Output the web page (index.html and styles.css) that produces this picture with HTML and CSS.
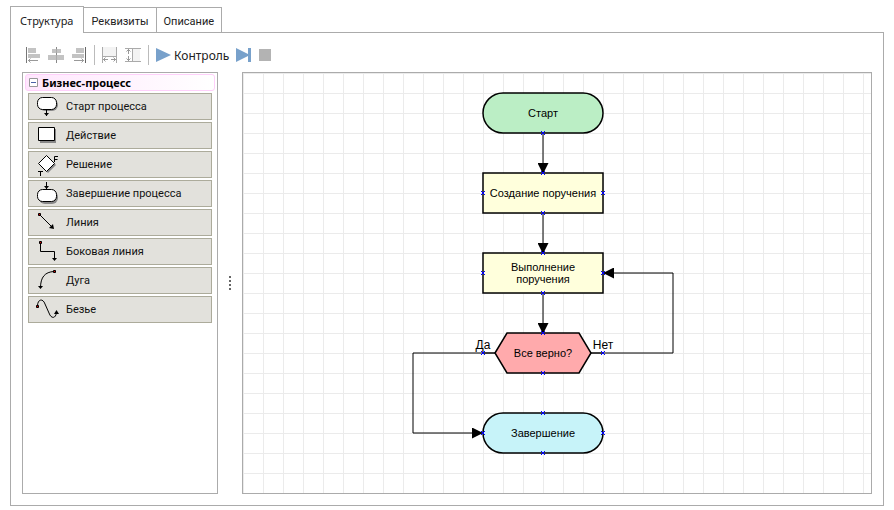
FILE: index.html
```html
<!DOCTYPE html>
<html lang="ru">
<head>
    <meta charset="UTF-8">
    <title>Бизнес-процесс</title>
    <link rel="stylesheet" href="styles.css">
</head>
<body>
    <div class="tabs" role="tablist">
        <button class="tab active" type="button" role="tab" aria-selected="true">Структура</button>
        <button class="tab" type="button" role="tab" aria-selected="false">Реквизиты</button>
        <button class="tab" type="button" role="tab" aria-selected="false">Описание</button>
    </div>
    <main class="panel">
        <div class="toolbar" role="toolbar">
            <button class="tool" type="button" aria-label="По левому краю">
                <svg width="16" height="18" viewBox="0 0 16 18">
                    <path d="M1.500 1v16" stroke="#777" fill="none"/>
                    <path d="M3 2h8v5H3zM3 8h12v4H3z" fill="#c3c3c3"/>
                    <path d="M3 14.500h10M5.500 12.500l-2 2 2 2" stroke="#999" fill="none"/>
                </svg>
            </button>
            <button class="tool" type="button" aria-label="По центру">
                <svg width="16" height="18" viewBox="0 0 16 18">
                    <path d="M8.500 1v16" stroke="#888" fill="none"/>
                    <path d="M4 3h9v4H4zM0 9h16v5H0z" fill="#c3c3c3"/>
                    <path d="M8.500 3v4M8.500 9v5" stroke="#aaa"/>
                </svg>
            </button>
            <button class="tool" type="button" aria-label="По правому краю">
                <svg width="16" height="18" viewBox="0 0 16 18">
                    <path d="M14.500 1v16" stroke="#666" fill="none"/>
                    <path d="M5 2h8v5H5zM1 8h12v4H1z" fill="#c3c3c3"/>
                    <path d="M3 14.500h10M10.500 12.500l2 2-2 2" stroke="#999" fill="none"/>
                </svg>
            </button>
            <span class="separator"></span>
            <button class="tool" type="button" aria-label="Одинаковая ширина">
                <svg width="16" height="18" viewBox="0 0 16 18">
                    <path d="M1 1h13v9H1z" fill="#f3f3f3"/>
                    <path d="M.5 1v16M14.500 1v16M1 10.500h14" stroke="#aaa" fill="none"/>
                    <path d="M1 13.500h5M9 13.500h5M3.500 11.500l-2 2 2 2M11.500 11.500l2 2-2 2" stroke="#999" fill="none"/>
                </svg>
            </button>
            <button class="tool" type="button" aria-label="Одинаковая высота">
                <svg width="16" height="18" viewBox="0 0 16 18">
                    <path d="M7 3h8v12H7z" fill="#f3f3f3"/>
                    <path d="M0 2.500h16M0 15.500h16M7.500 2v14" stroke="#aaa" fill="none"/>
                    <path d="M3.500 3v5M3.500 10v5M1.500 5.500l2-2 2 2M1.500 12.500l2 2 2-2" stroke="#999" fill="none"/>
                </svg>
            </button>
            <span class="separator"></span>
            <button class="tool check" type="button">
                <svg width="16" height="16" viewBox="0 0 16 16"><path d="M0 1l15 7-15 7z" fill="#78a1cb"/></svg>
                Контроль
            </button>
            <button class="tool" type="button" aria-label="Шаг">
                <svg width="16" height="16" viewBox="0 0 16 16"><path d="M0 1l12 6V1h3v14h-3V9L0 15z" fill="#78a1cb"/></svg>
            </button>
            <button class="tool" type="button" aria-label="Стоп">
                <svg width="12" height="12" viewBox="0 0 12 12"><path d="M0 0h12v12H0z" fill="#b3b3b3"/></svg>
            </button>
        </div>
        <div class="workspace">
            <aside class="palette">
                <button class="group" type="button" aria-expanded="true">
                    <svg width="9" height="9" viewBox="0 0 9 9">
                        <path d="M.5.5h8v8h-8z" fill="#fff" stroke="#989898"/>
                        <path d="M2 4.500h5" stroke="#4b63a7"/>
                    </svg>
                    Бизнес-процесс
                </button>
                <div class="items">
                    <button class="item" type="button">
                        <svg width="24" height="25" viewBox="0 0 24 25">
                            <rect x="4" y="5" width="19" height="12" rx="6" fill="#888"/>
                            <rect x="2.500" y="3.500" width="19" height="12" rx="5" fill="#fff" stroke="#000"/>
                            <path d="M11.500 16v6" stroke="#000"/>
                            <path d="M9 19h5l-2.500 3z"/>
                        </svg>
                        Старт процесса
                    </button>
                    <button class="item" type="button">
                        <svg width="24" height="25" viewBox="0 0 24 25">
                            <path d="M5 6h16v14H5z" fill="#888"/>
                            <path d="M3.500 4.500h16v13h-16z" fill="#fff" stroke="#000"/>
                        </svg>
                        Действие
                    </button>
                    <button class="item" type="button">
                        <svg width="24" height="25" viewBox="0 0 24 25">
                            <path d="M13 5l8 8-8 8-8-8z" fill="#888"/>
                            <path d="M11.500 3.500l8 8-8 8-8-8z" fill="#fff" stroke="#000"/>
                            <path d="M19.500 10V4.500H23M19.500 7.500h3M3 19.500h5M5.500 19v5" fill="none" stroke="#000"/>
                        </svg>
                        Решение
                    </button>
                    <button class="item" type="button">
                        <svg width="24" height="25" viewBox="0 0 24 25">
                            <rect x="4" y="10" width="19" height="13" rx="6" fill="#888"/>
                            <rect x="2.500" y="8.500" width="19" height="12" rx="5" fill="#fff" stroke="#000"/>
                            <path d="M11.500 1v7" stroke="#000"/>
                            <path d="M9 5h5l-2.500 3z"/>
                        </svg>
                        Завершение процесса
                    </button>
                    <button class="item" type="button">
                        <svg width="24" height="25" viewBox="0 0 24 25">
                            <path d="M5 5l13 13" stroke="#000"/>
                            <path d="M19 19l-5-1 4-4z"/>
                            <path d="M3.500 3.500h2v2h-2z" fill="#d00" stroke="#000"/>
                        </svg>
                        Линия
                    </button>
                    <button class="item" type="button">
                        <svg width="24" height="25" viewBox="0 0 24 25">
                            <path d="M5.500 4v8.500h14V21" fill="none" stroke="#000"/>
                            <path d="M17 19h5l-2.500 3z"/>
                            <path d="M4.500 2.500h2v2h-2z" fill="#d00" stroke="#000"/>
                        </svg>
                        Боковая линия
                    </button>
                    <button class="item" type="button">
                        <svg width="24" height="25" viewBox="0 0 24 25">
                            <path d="M19 3.500C10 4 5.500 9 5.500 20" fill="none" stroke="#000"/>
                            <path d="M3 18h5l-2.500 3z"/>
                            <path d="M18.500 2.500h2v2h-2z" fill="#d00" stroke="#000"/>
                        </svg>
                        Дуга
                    </button>
                    <button class="item" type="button">
                        <svg width="24" height="25" viewBox="0 0 24 25">
                            <path d="M2.500 9C2.500 2 8 1 10 7l4 9c2 6 7 6 7.500-1" fill="none" stroke="#000"/>
                            <path d="M19 17h5l-2.500-4z"/>
                            <path d="M1.500 8.500h2v2h-2z" fill="#d00" stroke="#000"/>
                        </svg>
                        Безье
                    </button>
                </div>
            </aside>
            <div class="splitter">
                <span></span><span></span><span></span><span></span>
            </div>
            <section class="canvas">
                <svg class="diagram" width="480" height="400" viewBox="0 0 480 400">
                    <defs>
                        <marker id="arrow" viewBox="0 0 11 11" refX="11" refY="5.500" markerWidth="11" markerHeight="11" orient="auto">
                            <path d="M0 0l11 5.500L0 11z"/>
                        </marker>
                        <path id="port" d="M-2-2l4 4M-2 2l4-4"/>
                    </defs>

                    <g class="links">
                        <path d="M300 60v41"/>
                        <path d="M300 140v41"/>
                        <path d="M300 220v41"/>
                        <path d="M360 280h70v-80h-70"/>
                        <path d="M240 280h-70v80h70"/>
                    </g>

                    <g class="nodes">
                        <rect class="start" x="240" y="20" width="120" height="40" rx="20"/>
                        <rect class="action" x="240" y="100" width="120" height="40"/>
                        <rect class="action" x="240" y="180" width="120" height="40"/>
                        <path class="decision" d="M252 280l12-20h72l12 20-12 20h-72z"/>
                        <path d="M240 280h12M348 280h12"/>
                        <rect class="finish" x="240" y="340" width="120" height="40" rx="20"/>
                    </g>

                    <g class="captions">
                        <text x="300" y="44">Старт</text>
                        <text x="300" y="124">Создание поручения</text>
                        <text x="300" y="198">Выполнение</text>
                        <text x="300" y="210">поручения</text>
                        <text x="300" y="284">Все верно?</text>
                        <text x="300" y="364">Завершение</text>
                        <text class="branch" x="240" y="276">Да</text>
                        <text class="branch" x="360" y="276">Нет</text>
                    </g>

                    <g class="ports">
                        <use href="#port" x="300" y="60"/>
                        <use href="#port" x="300" y="100"/>
                        <use href="#port" x="240" y="120"/>
                        <use href="#port" x="360" y="120"/>
                        <use href="#port" x="300" y="140"/>
                        <use href="#port" x="300" y="180"/>
                        <use href="#port" x="240" y="200"/>
                        <use href="#port" x="360" y="200"/>
                        <use href="#port" x="300" y="220"/>
                        <use href="#port" x="300" y="260"/>
                        <use href="#port" x="240" y="280"/>
                        <use href="#port" x="360" y="280"/>
                        <use href="#port" x="300" y="300"/>
                        <use href="#port" x="300" y="340"/>
                        <use href="#port" x="240" y="360"/>
                        <use href="#port" x="360" y="360"/>
                        <use href="#port" x="300" y="380"/>
                    </g>
                </svg>
            </section>
        </div>
    </main>
</body>
</html>
```

FILE: styles.css
```css
* {
    box-sizing: border-box;
}

body {
    display: flex;
    flex-direction: column;
    min-height: 100vh;
    margin: 0;
    padding: 6px 10px 4px;
    font-family: Roboto, "Noto Sans", sans-serif;
    font-size: 11px;
    color: #222;
    background: #fff;
}

button {
    margin: 0;
    padding: 0;
    border: 0;
    font: inherit;
    color: inherit;
    background: none;
}

svg {
    display: block;
    flex: none;
}

.tabs {
    display: flex;
    align-items: flex-end;
}

.tab {
    height: 25px;
    padding: 3px 7px 0;
    border: 1px solid #ababab;
    border-bottom: 0;
    border-left: 0;
    background: #fff;
}

.tab.active {
    z-index: 1;
    height: 27px;
    margin-bottom: -1px;
    padding: 0 10px 0 9px;
    border-left: 1px solid #ababab;
    font-family: "Noto Sans", "Open Sans", sans-serif;
}

.panel {
    display: flex;
    flex: 1;
    flex-direction: column;
    padding: 11px;
    border: 1px solid #ababab;
}

.toolbar {
    display: flex;
    align-items: center;
    gap: 7px;
    height: 22px;
    margin-bottom: 6px;
    padding-left: 3px;
}

.tool {
    display: flex;
    align-items: center;
    gap: 2px;
}

.check {
    font-family: "Noto Sans", "Open Sans", sans-serif;
    font-size: 12px;
}

.separator {
    width: 1px;
    height: 20px;
    background: #bbb;
}

.workspace {
    display: flex;
    flex: 1;
}

.palette {
    width: 196px;
    padding: 1px 2px;
    border: 1px solid #ababab;
}

.group {
    display: flex;
    align-items: center;
    gap: 4px;
    width: 100%;
    height: 17px;
    padding-left: 3px;
    border: 1px solid #ffd0fb;
    border-radius: 3px;
    font-family: "Noto Sans", "Open Sans", sans-serif;
    font-weight: bold;
    color: #000;
    background: linear-gradient(to right, #ffe6fd, #fff);
}

.items {
    display: flex;
    flex-direction: column;
    gap: 2px;
    padding: 2px 3px;
}

.item {
    display: flex;
    align-items: center;
    gap: 7px;
    height: 27px;
    padding-left: 6px;
    border: 1px solid #acab9b;
    color: #111;
    background: #e2e1dc;
}

.splitter {
    display: flex;
    flex-direction: column;
    align-items: center;
    justify-content: center;
    gap: 2px;
    width: 24px;
}

.splitter span {
    width: 2px;
    height: 2px;
    background: #666;
}

.canvas {
    flex: 1;
    overflow: hidden;
    border: 1px solid #ababab;
    background-image:
        linear-gradient(to right, #ebebeb 1px, transparent 1px),
        linear-gradient(to bottom, #ebebeb 1px, transparent 1px);
    background-size: 20px 20px;
}

.links path {
    fill: none;
    stroke: #000;
    marker-end: url(#arrow);
}

.nodes {
    fill: none;
    stroke: #000;
    stroke-width: 1.5;
}

.start {
    fill: #bbeec5;
}

.action {
    fill: #ffffdc;
}

.decision {
    fill: #ffaaac;
}

.finish {
    fill: #c7f3f9;
}

.captions {
    font-family: "Liberation Sans", Arial, sans-serif;
    font-size: 11px;
    text-anchor: middle;
}

.branch {
    font-size: 12px;
}

.ports {
    stroke: #00f;
}
```
